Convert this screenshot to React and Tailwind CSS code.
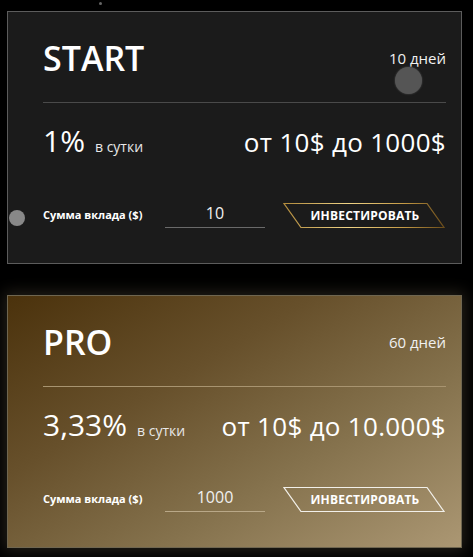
import React, { useState } from "react";

// Кнопка-параллелограмм с рамкой
function InvestButton({ gold }) {
  return (
    <button className="relative w-[162px] h-[25px] flex items-center justify-center">
      <svg className="absolute inset-0" width="162" height="25" viewBox="0 0 162 25">
        <defs>
          <linearGradient id="goldStroke" x1="0" y1="0" x2="1" y2="0">
            <stop offset="0%" stopColor="#b08a3c" />
            <stop offset="40%" stopColor="#f0d487" />
            <stop offset="75%" stopColor="#c49a45" />
            <stop offset="100%" stopColor="#6a4c1a" />
          </linearGradient>
        </defs>
        <polygon
          points="1,0.5 144,0.5 161,24.5 18,24.5"
          fill="none"
          stroke={gold ? "url(#goldStroke)" : "#f2f0ea"}
          strokeWidth="1.2"
        />
      </svg>
      <span className="relative text-[12px] font-bold text-white tracking-[0.2px] pl-[2px]">ИНВЕСТИРОВАТЬ</span>
    </button>
  );
}

// Карточка тарифа
function PlanCard({ plan, amount, setAmount }) {
  const pro = plan.pro;
  return (
    <div
      className={`w-[455px] ml-[7px] border pl-[35px] pr-[15px] pt-[26px] pb-[35px] ${
        pro
          ? "border-[#6f6650] bg-[linear-gradient(150deg,#4b320c_0%,#67502b_35%,#84714c_65%,#ab9773_100%)] shadow-[0_0_14px_3px_rgba(90,80,62,0.4)]"
          : "border-[#5c5c5c] bg-[#1b1b1b]"
      }`}
    >
      <div className="flex items-center justify-between h-[40px]">
        <span className="text-[34px] font-semibold text-white leading-none">{plan.name}</span>
        <span className="text-[15px] text-[#f0f0f0]">{plan.days}</span>
      </div>
      <div className={`mt-[24px] h-px ${pro ? "bg-[#a89470]" : "bg-[#4a4a4a]"}`} />
      <div className="mt-[23px] flex items-baseline justify-between h-[40px]">
        <div className="flex items-baseline">
          <span className="text-[30px] text-white leading-none">{plan.rate}</span>
          <span className="ml-[10px] text-[14px] text-[#e8e8e8]">в сутки</span>
        </div>
        <span className="text-[26px] tracking-[0.3px] text-white leading-none">{plan.range}</span>
      </div>
      <div className="mt-[37px] flex items-center h-[25px]">
        <span className="w-[122px] text-[11px] font-bold text-white">Сумма вклада ($)</span>
        <input
          value={amount}
          onChange={(e) => setAmount(e.target.value)}
          className={`w-[100px] h-[24px] bg-transparent text-center text-[16px] text-[#f0f0f0] outline-none border-b ${
            pro ? "border-[#b9a888]" : "border-[#6a6a6a]"
          } pb-[4px]`}
        />
        <div className="ml-[18px]">
          <InvestButton gold={!pro} />
        </div>
      </div>
    </div>
  );
}

export default function App() {
  const [start, setStart] = useState("10");
  const [pro, setPro] = useState("1000");

  return (
    <div className="relative w-[473px] h-[557px] bg-black overflow-hidden font-['Open_Sans',sans-serif]">
      <div className="pt-[11px] flex flex-col gap-[31px]">
        <PlanCard
          plan={{ name: "START", days: "10 дней", rate: "1%", range: "от 10$ до 1000$" }}
          amount={start}
          setAmount={setStart}
        />
        <PlanCard
          plan={{ name: "PRO", days: "60 дней", rate: "3,33%", range: "от 10$ до 10.000$", pro: true }}
          amount={pro}
          setAmount={setPro}
        />
      </div>
      {/* декоративные частицы */}
      <span className="absolute left-[99px] top-[2px] w-[3px] h-[3px] rounded-full bg-[#666]" />
      <span className="absolute left-[395px] top-[67px] w-[27px] h-[27px] rounded-full bg-[#555] shadow-[0_0_2px_#555]" />
      <span className="absolute left-[9px] top-[210px] w-[16px] h-[16px] rounded-full bg-[#888]" />
    </div>
  );
}
